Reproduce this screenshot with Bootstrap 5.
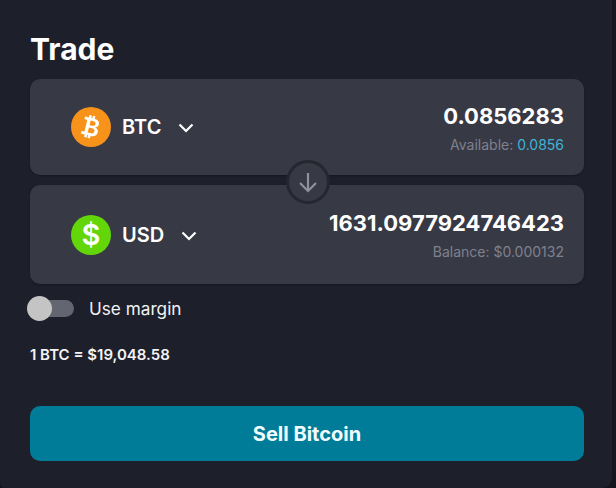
<!doctype html>
<html lang="en">
<head>
<meta charset="utf-8">
<title>Trade</title>
<link href="https://cdn.jsdelivr.net/npm/bootstrap@5.3.0/dist/css/bootstrap.min.css" rel="stylesheet">
<style>
html,body{height:100%}
body{background:#14151d;font-family:Inter,"Liberation Sans",sans-serif;color:#fff;overflow:hidden}
.trade-panel{width:612px;height:488px;background:#1d1f2a;border-radius:0 0 10px 6px;padding:31px 28px 0 30px}
.trade-title{font-size:30px;font-weight:700;line-height:36px;margin:0 0 12px;color:#fff}
.swap-wrap{position:relative}
.swap-box{background:#373945;border-radius:10px;padding:0 20px 0 41px;box-shadow:0 1px 2px rgba(0,0,0,.25)}
.swap-top{height:96px;margin-bottom:10px}
.swap-bottom{height:99px}
.coin-ico{width:40px;height:40px;border-radius:50%;flex:none}
.coin-btc{background:#f7931a}
.coin-usd{background:#63d609;font-size:29px;font-weight:600;line-height:40px;text-align:center}
.coin-name{font-size:20px;font-weight:600;margin-left:11px;line-height:24px}
.chev{margin-left:17px;flex:none;margin-top:2px}
.amount{font-size:22px;font-weight:700;line-height:30px}
.amount-note{font-size:14px;color:#7f818d;line-height:18px;margin-top:5px}
.amount-note span{color:#3fb3d6}
.swap-arrow{position:absolute;left:256px;top:81px;width:44px;height:44px;border-radius:50%;background:#373945;border:3px solid #242630}
.margin-row{margin-top:12px;height:26px}
.tog{position:relative;display:block;width:44px;height:17px;border-radius:9px;background:#636570;margin-left:0;margin-top:-2px}
.tog::before{content:"";position:absolute;left:-3px;top:-4px;width:25px;height:25px;border-radius:50%;background:#c4c4c4}
.margin-label{font-size:17.2px;font-weight:400;margin-left:15px;color:#f2f2f4}
.rate{font-size:15px;font-weight:600;line-height:20px;margin-top:23px;color:#f4f4f6}
.sell-btn{display:block;width:100%;height:55px;margin-top:41px;background:#007c99;border:0;border-radius:10px;font-size:20px;font-weight:700;color:#f0fcff}
.sell-btn:hover{background:#007c99;color:#f0fcff}
</style>
</head>
<body>
<div class="trade-panel">
  <h1 class="trade-title">Trade</h1>
  <div class="swap-wrap">
    <div class="swap-box swap-top d-flex align-items-center justify-content-between">
      <div class="d-flex align-items-center">
        <div class="coin-ico coin-btc d-flex align-items-center justify-content-center">
          <svg width="28" height="28" viewBox="0 0 16 16" fill="#fff" transform="rotate(14)"><path d="M5.5 13v1.25c0 .138.112.25.25.25h1a.25.25 0 0 0 .25-.25V13h.5v1.25c0 .138.112.25.25.25h1a.25.25 0 0 0 .25-.25V13h.084c1.992 0 3.416-1.033 3.416-2.82 0-1.502-1.007-2.323-2.186-2.44v-.088c.97-.242 1.683-.974 1.683-2.19C11.997 3.93 10.847 3 9.092 3H9V1.75a.25.25 0 0 0-.25-.25h-1a.25.25 0 0 0-.25.25V3h-.573V1.75a.25.25 0 0 0-.25-.25H5.75a.25.25 0 0 0-.25.25V3l-1.998.011a.25.25 0 0 0-.25.25v.989c0 .137.11.25.248.25l.755-.005a.75.75 0 0 1 .745.75v5.505a.75.75 0 0 1-.75.75l-.748.011a.25.25 0 0 0-.25.25v1c0 .138.112.25.25.25L5.5 13zm1.427-8.513h1.719c.906 0 1.438.498 1.438 1.312 0 .871-.575 1.362-1.877 1.362h-1.28V4.487zm0 4.051h1.84c1.137 0 1.756.58 1.756 1.524 0 .953-.626 1.45-2.158 1.45H6.927V8.539z"/></svg>
        </div>
        <span class="coin-name">BTC</span>
        <svg class="chev" width="16" height="10" viewBox="0 0 16 10" fill="none" stroke="#fff" stroke-width="2.2"><path d="M1.5 1.5 8 8 14.5 1.5"/></svg>
      </div>
      <div class="text-end">
        <div class="amount">0.0856283</div>
        <div class="amount-note">Available: <span>0.0856</span></div>
      </div>
    </div>
    <div class="swap-box swap-bottom d-flex align-items-center justify-content-between">
      <div class="d-flex align-items-center">
        <div class="coin-ico coin-usd">$</div>
        <span class="coin-name">USD</span>
        <svg class="chev" width="16" height="10" viewBox="0 0 16 10" fill="none" stroke="#fff" stroke-width="2.2"><path d="M1.5 1.5 8 8 14.5 1.5"/></svg>
      </div>
      <div class="text-end">
        <div class="amount">1631.0977924746423</div>
        <div class="amount-note">Balance: $0.000132</div>
      </div>
    </div>
    <div class="swap-arrow d-flex align-items-center justify-content-center">
      <svg width="22" height="22" viewBox="0 0 22 22" fill="none" stroke="#8f919c" stroke-width="2.2"><path d="M11 2V20M3 12 11 20 19 12"/></svg>
    </div>
  </div>
  <div class="margin-row d-flex align-items-center">
    <span class="tog"></span>
    <span class="margin-label">Use margin</span>
  </div>
  <div class="rate">1 BTC = $19,048.58</div>
  <button class="btn sell-btn" type="button">Sell Bitcoin</button>
</div>
<script src="https://cdn.jsdelivr.net/npm/bootstrap@5.3.0/dist/js/bootstrap.bundle.min.js"></script>
</body>
</html>
